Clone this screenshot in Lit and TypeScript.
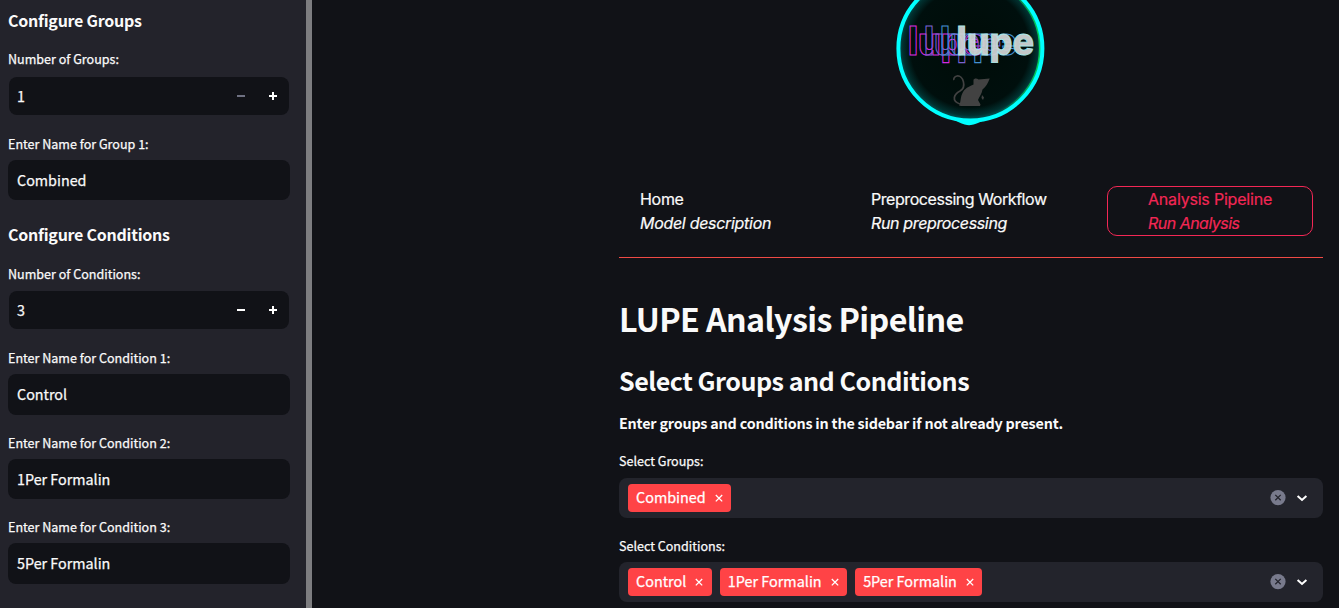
import { LitElement, html, css, svg } from "lit";
import { customElement, property } from "lit/decorators.js";

const FONT = css`"Noto Sans CJK SC", "Noto Sans", sans-serif`;

@customElement("side-field")
class SideField extends LitElement {
  @property() label = "";
  @property() value = "";
  @property({ type: Boolean }) stepper = false;
  @property({ type: Boolean }) atMin = false;
  static styles = css`
    :host { display: block; font-family: ${FONT}; color: #fafafa; -webkit-text-stroke: .25px currentColor; }
    .label { height: 21px; line-height: 21px; font-size: 12.55px; margin-bottom: 6px; white-space: nowrap; }
    .box { box-sizing: border-box; height: 40.6px; border-radius: 8px; background: #111217; padding: 0 9px;
      display: flex; align-items: center; font-size: 14.33px; line-height: 24px; }
    .label.num { margin-bottom: var(--gap, 7.5px); }
    .box.num { height: 38px; margin: 0 1px; padding: 0 0 0 8px; }
    .value { flex: 1; }
    .step { width: 32px; height: 38px; display: flex; align-items: center; justify-content: center; color: #fff; }
    .off { color: #6f7182; }
    svg { display: block; }
  `;
  render() {
    const n = this.stepper ? "num" : "";
    return html`
      <div class="label ${n}">${this.label}</div>
      <div class="box ${n}">
        <span class="value">${this.value}</span>
        ${this.stepper
          ? html`<span class="step ${this.atMin ? "off" : ""}"><svg width="8" height="8"><path d="M0 3h8v2H0z" fill="currentColor"/></svg></span>
              <span class="step"><svg width="8" height="8"><path d="M0 3h3V0h2v3h3v2H5v3H3V5H0z" fill="currentColor"/></svg></span>`
          : ""}
      </div>`;
  }
}

@customElement("multi-select")
class MultiSelect extends LitElement {
  @property() label = "";
  @property({ attribute: false }) items: string[] = [];
  static styles = css`
    :host { display: block; font-family: ${FONT}; color: #fafafa; -webkit-text-stroke: .25px currentColor; }
    .label { height: 21px; line-height: 21px; font-size: 12.55px; margin-bottom: var(--gap, 6.4px); }
    .box { height: 40px; box-sizing: border-box; border-radius: 8px; background: #23242c; display: flex; align-items: center; padding: 0 13px 0 9px; gap: 8px; }
    .tag { height: 28px; border-radius: 4px; background: #ff4346; color: #fff; display: flex; align-items: center; padding: 0 8.5px 0 8px; gap: 9px; font-size: 14.4px; white-space: nowrap; }
    .tag span { line-height: 24px; margin-bottom: 2px; }
    .spacer { flex: 1; }
    .icons { display: flex; align-items: center; gap: 8px; }
    svg { display: block; }
  `;
  render() {
    return html`
      <div class="label">${this.label}</div>
      <div class="box">
        ${this.items.map((t) => html`<span class="tag"><span>${t}</span><svg width="8" height="8" viewBox="0 0 8 8"><path d="M.8 1l6.4 6.4M7.2 1L.8 7.4" stroke="#fff" stroke-width="1.3"/></svg></span>`)}
        <span class="spacer"></span>
        <span class="icons">
          <svg width="16" height="16" viewBox="0 0 16 16"><circle cx="8" cy="7.6" r="7.6" fill="#787a8c"/><path d="M5.3 4.9l5.4 5.4M10.7 4.9l-5.4 5.4" stroke="#23242c" stroke-width="1.3"/></svg>
          <svg width="16" height="16" viewBox="0 0 16 16"><path d="M3.6 5.9L8 10l4.4-4.1" fill="none" stroke="#fff" stroke-width="2"/></svg>
        </span>
      </div>`;
  }
}

@customElement("lupe-logo")
class LupeLogo extends LitElement {
  static styles = css`
    :host { display: block; width: 160px; height: 130px; }
    svg { display: block; overflow: hidden; }
    text { font-family: Inter, "Liberation Sans", sans-serif; font-weight: 800; font-size: 39px; }
  `;
  render() {
    const ghost = (x: number, c: string) => svg`<text x=${x} y="55.400" textLength="77" lengthAdjust="spacingAndGlyphs" fill="none" stroke=${c} stroke-width="1.1">lupe</text>`;
    return html`<svg width="160" height="130" viewBox="0 0 160 130">
      <defs>
        <radialGradient id="disc" gradientUnits="userSpaceOnUse" cx="80" cy="48" r="74">
          <stop offset="0" stop-color="#000c08"/><stop offset=".8" stop-color="#000f0d"/>
          <stop offset=".91" stop-color="#01302f"/><stop offset="1" stop-color="#026e70"/>
        </radialGradient>
        <linearGradient id="rim" x1="0" x2="1" y1="0" y2="0">
          <stop offset=".7" stop-color="#00ff62" stop-opacity="0"/><stop offset="1" stop-color="#00ff62" stop-opacity=".75"/>
        </linearGradient>
      </defs>
      <path d="M50 112Q72 125.300 79 125.300Q86 125.300 110 112Z" fill="#0ff"/>
      <circle cx="80.400" cy="48.500" r="72" fill="url(#disc)"/>
      <circle cx="80.400" cy="48.500" r="69.500" fill="none" stroke="url(#rim)" stroke-width="2"/>
      <circle cx="80.400" cy="48.500" r="72" fill="none" stroke="#0ff" stroke-width="4"/>
      ${ghost(18, "#d42be0")}${ghost(34, "#7a62d0")}${ghost(50, "#4590d0")}
      <text x="66.500" y="55.400" textLength="77.500" lengthAdjust="spacingAndGlyphs" fill="#d0d4d4" fill-opacity=".94" stroke="#a9e6e8" stroke-width=".9">lupe</text>
      <path d="M70 104C61 101 64 94 70 91C77 87 73 75 67 76C64 76.500 63.500 79 64 80" fill="none" stroke="#424242" stroke-width="1.700"/>
      <path d="M69 105.500C71 103 70 97 73 92C76 87 81 86 83.500 84.500L83.500 80C84 78 87 78 88.500 79.500L99.700 78.500C98 83 96 87 92.500 89.500C92 94 89 97 88 100L90.500 104.500L90 106H71Z" fill="#424242"/>
      <path d="M92 95L94 97.500L93 100L91.500 98Z" fill="#424242"/>
    </svg>`;
  }
}

@customElement("app-root")
class AppRoot extends LitElement {
  static styles = css`
    :host { display: flex; width: 1339px; height: 608px; overflow: hidden; background: #111217; color: #fafafa; font-family: ${FONT}; }
    .side { box-sizing: border-box; width: 306px; padding: 7px 16px 0 8px; background: #23232b; display: flex; flex-direction: column; }
    .side h3 { margin: 0; font-size: 16px; line-height: 26px; height: 26px; font-weight: 700; letter-spacing: -.25px; flex: none; }
    .a { margin-top: 15px; --gap: 8px; }
    .b1 { margin-top: 17.7px; }
    .b { margin-top: 17px; }
    .side h3.c { margin-top: 21px; }
    .d { margin-top: 15.5px; }
    .grip { width: 6px; background: #7d7d80; }
    .main { flex: 1; padding: 0 16px 0 307px; }
    .logo { display: flex; justify-content: center; }
    .logo lupe-logo { margin-right: 3px; }
    nav { display: flex; margin-top: 56px; height: 50px; font: 400 16px/24px Inter, sans-serif; letter-spacing: -.3px; -webkit-text-stroke: .2px currentColor; }
    nav div { box-sizing: border-box; white-space: nowrap; padding-top: 1px; }
    .n1 { width: 252px; padding-left: 21px; }
    .n2 { width: 236px; letter-spacing: -.44px; }
    .n2 em { letter-spacing: -.36px; }
    nav .n3 { width: 206px; border: 1px solid #f32755; border-radius: 10px; padding: 0 0 0 40px; color: #f32755; letter-spacing: -.2px; }
    .n3 em { letter-spacing: -.52px; }
    nav em { display: block; }
    hr { margin: 21px 0 0; border: 0; height: 1px; background: #f04a45; }
    h1 { margin: 38px 0 0; font-size: 32.2px; line-height: 44px; font-weight: 700; letter-spacing: -.6px; }
    h2 { margin: 23px 0 0; font-size: 25.1px; line-height: 34px; font-weight: 700; letter-spacing: -.48px; }
    p { margin: 14px 0 0; font-size: 14.33px; line-height: 24px; font-weight: 700; letter-spacing: -.19px; }
    .s1 { margin-top: 15px; --gap: 7px; }
    .s2 { margin-top: 16.6px; }
  `;
  render() {
    return html`
      <aside class="side">
        <h3>Configure Groups</h3>
        <side-field class="a" label="Number of Groups:" value="1" stepper .atMin=${true}></side-field>
        <side-field class="b1" label="Enter Name for Group 1:" value="Combined"></side-field>
        <h3 class="c">Configure Conditions</h3>
        <side-field class="d" label="Number of Conditions:" value="3" stepper></side-field>
        <side-field class="b1" label="Enter Name for Condition 1:" value="Control"></side-field>
        <side-field class="b" label="Enter Name for Condition 2:" value="1Per Formalin"></side-field>
        <side-field class="b" label="Enter Name for Condition 3:" value="5Per Formalin"></side-field>
      </aside>
      <div class="grip"></div>
      <main class="main">
        <div class="logo"><lupe-logo></lupe-logo></div>
        <nav>
          <div class="n1">Home<em>Model description</em></div>
          <div class="n2">Preprocessing Workflow<em>Run preprocessing</em></div>
          <div class="n3">Analysis Pipeline<em>Run Analysis</em></div>
        </nav>
        <hr />
        <h1>LUPE Analysis Pipeline</h1>
        <h2>Select Groups and Conditions</h2>
        <p>Enter groups and conditions in the sidebar if not already present.</p>
        <multi-select class="s1" label="Select Groups:" .items=${["Combined"]}></multi-select>
        <multi-select class="s2" label="Select Conditions:" .items=${["Control", "1Per Formalin", "5Per Formalin"]}></multi-select>
      </main>`;
  }
}
